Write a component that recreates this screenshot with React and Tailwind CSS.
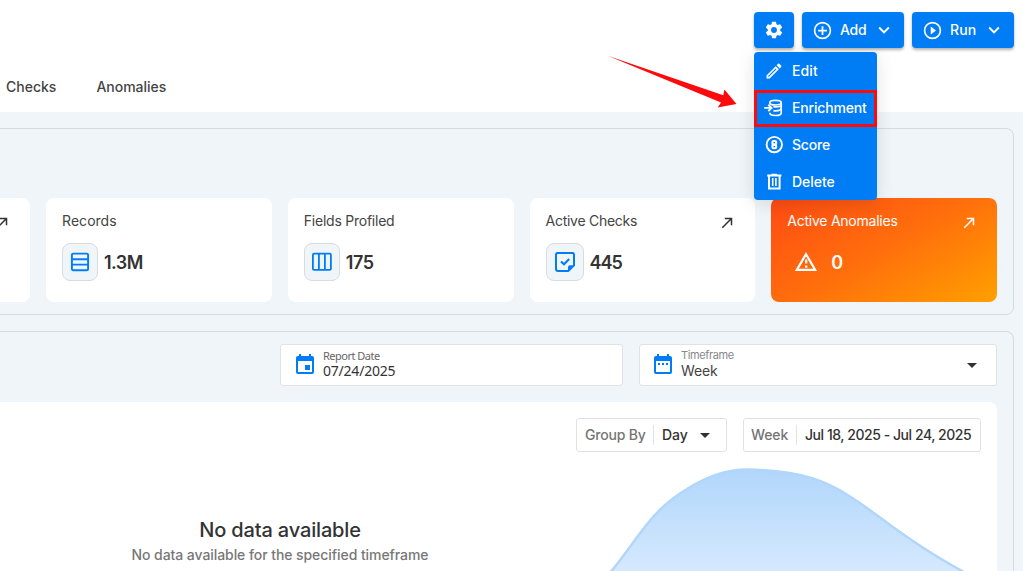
import React from "react";

const paths = {
  cog: "M12,15.5A3.5,3.5 0 0,1 8.5,12A3.5,3.5 0 0,1 12,8.5A3.5,3.5 0 0,1 15.5,12A3.5,3.5 0 0,1 12,15.5M19.43,12.97C19.47,12.65 19.5,12.33 19.5,12C19.5,11.67 19.47,11.34 19.43,11L21.54,9.37C21.73,9.22 21.78,8.95 21.66,8.73L19.66,5.27C19.54,5.05 19.27,4.96 19.05,5.05L16.56,6.05C16.04,5.66 15.5,5.32 14.87,5.07L14.5,2.42C14.46,2.18 14.25,2 14,2H10C9.75,2 9.54,2.18 9.5,2.42L9.13,5.07C8.5,5.32 7.96,5.66 7.44,6.05L4.95,5.05C4.73,4.96 4.46,5.05 4.34,5.27L2.34,8.73C2.21,8.95 2.27,9.22 2.46,9.37L4.57,11C4.53,11.34 4.5,11.67 4.5,12C4.5,12.33 4.53,12.65 4.57,12.97L2.46,14.63C2.27,14.78 2.21,15.05 2.34,15.27L4.34,18.73C4.46,18.95 4.73,19.03 4.95,18.95L7.44,17.94C7.96,18.34 8.5,18.68 9.13,18.93L9.5,21.58C9.54,21.82 9.75,22 10,22H14C14.25,22 14.46,21.82 14.5,21.58L14.87,18.93C15.5,18.67 16.04,18.34 16.56,17.94L19.05,18.95C19.27,19.03 19.54,18.95 19.66,18.73L21.66,15.27C21.78,15.05 21.73,14.78 21.54,14.63L19.43,12.97Z",
  plus: "M12,20C7.59,20 4,16.41 4,12C4,7.59 7.59,4 12,4C16.41,4 20,7.59 20,12C20,16.41 16.41,20 12,20M12,2A10,10 0 0,0 2,12A10,10 0 0,0 12,22A10,10 0 0,0 22,12A10,10 0 0,0 12,2M13,7H11V11H7V13H11V17H13V13H17V11H13V7Z",
  play: "M12,20C7.59,20 4,16.41 4,12C4,7.59 7.59,4 12,4C16.41,4 20,7.59 20,12C20,16.41 16.41,20 12,20M12,2A10,10 0 0,0 2,12A10,10 0 0,0 12,22A10,10 0 0,0 22,12A10,10 0 0,0 12,2M10,16.5L16,12L10,7.5V16.5Z",
  chevron: "M7.41,8.58L12,13.17L16.59,8.58L18,10L12,16L6,10L7.41,8.58Z",
  pencil: "M14.06,9L15,9.94L5.92,19H5V18.08L14.06,9M17.66,3C17.41,3 17.15,3.1 16.96,3.29L15.13,5.12L18.88,8.87L20.71,7.04C21.1,6.65 21.1,6 20.71,5.63L18.37,3.29C18.17,3.09 17.92,3 17.66,3M14.06,6.19L3,17.25V21H6.75L17.81,9.94L14.06,6.19Z",
  arrow: "M5,17.59L15.59,7H9V5H19V15H17V8.41L6.41,19L5,17.59Z",
  calendar: "M19,19H5V8H19M16,1V3H8V1H6V3H5C3.89,3 3,3.89 3,5V19A2,2 0 0,0 5,21H19A2,2 0 0,0 21,19V5C21,3.89 20.1,3 19,3H18V1M17,12H12V17H17V12Z",
  range: "M9,10H7V12H9V10M13,10H11V12H13V10M17,10H15V12H17V10M19,3H18V1H16V3H8V1H6V3H5C3.89,3 3,3.9 3,5V19A2,2 0 0,0 5,21H19A2,2 0 0,0 21,19V5A2,2 0 0,0 19,3M19,19H5V8H19V19Z",
  caret: "M7,10L12,15L17,10H7Z",
};

function Icon({ name, className }) {
  return (
    <svg viewBox="0 0 24 24" fill="currentColor" className={"shrink-0 " + className}>
      <path d={paths[name]} />
    </svg>
  );
}

function EnrichmentIcon() {
  return (
    <svg viewBox="0 0 20 20" fill="none" stroke="currentColor" strokeWidth="1.7" className="size-5 shrink-0">
      <ellipse cx="11.5" cy="4.7" rx="5.700" ry="2.300" />
      <path d="M17.200 4.700V15c0 1.400-2.500 2.500-5.700 2.500s-5.700-1.100-5.700-2.700" />
      <path d="M9.400 12.600c.7.100 1.400.2 2.100.2 3.200 0 5.700-1.100 5.700-2.500M9.400 8.700c.7.100 1.400.1 2.100.1 3.200 0 5.700-.7 5.700-2.100" />
      <path d="M.2 9.900h7.300M4.300 6.700l3.300 3.200-3.300 3.200" strokeWidth="1.900" />
    </svg>
  );
}

function ScoreIcon() {
  return (
    <svg viewBox="0 0 20 20" fill="none" stroke="currentColor" className="size-5 shrink-0">
      <circle cx="10.300" cy="9.600" r="7.700" strokeWidth="1.900" />
      <rect x="8.400" y="6" width="3.800" height="3.600" rx="1.300" strokeWidth="2.100" />
      <rect x="8.400" y="9.600" width="3.800" height="3.600" rx="1.300" strokeWidth="2.100" />
    </svg>
  );
}

function TrashIcon() {
  return (
    <svg viewBox="0 0 20 20" fill="none" stroke="currentColor" className="size-5 shrink-0">
      <path d="M3.200 3.500h14.200M7.600 2.600h5.200" strokeWidth="1.900" />
      <path d="M5 3.500v12.900h10.600V3.500" strokeWidth="2" />
      <path d="M8.700 6v8M11.900 6v8" strokeWidth="1.600" />
    </svg>
  );
}

function RowsIcon() {
  return (
    <svg viewBox="0 0 20 20" fill="none" stroke="currentColor" strokeWidth="1.900" className="size-5">
      <rect x="1.900" y="1.600" width="16.200" height="16.600" rx="1.300" />
      <path d="M2 7.200h16M2 12.600h16" />
    </svg>
  );
}

function ColumnsIcon() {
  return (
    <svg viewBox="0 0 20 20" fill="none" stroke="currentColor" strokeWidth="1.800" className="size-5">
      <rect x="0.900" y="1.700" width="18" height="16.200" rx="1.200" />
      <path d="M6.900 2v16M12.900 2v16" />
    </svg>
  );
}

function ChecksIcon() {
  return (
    <svg viewBox="0 0 20 20" fill="none" stroke="currentColor" className="ml-px size-5">
      <path d="M13.500 18.900H2.800A1.800 1.800 0 0 1 1 17.100V2.500A1.800 1.800 0 0 1 2.800 .9H17.200A1.800 1.800 0 0 1 19 2.500V13.400Z" strokeWidth="2" strokeLinejoin="round" />
      <path d="M13 19.300V15.300A2 2 0 0 1 15 13.300H19.500Z" fill="currentColor" stroke="none" />
      <path d="M6 9.400l3 2.900 5.200-5.200" strokeWidth="2.100" />
    </svg>
  );
}

function ActionButton({ icon, label, tracking }) {
  return (
    <button className="flex h-9 w-[102px] items-center rounded bg-[#007df5] pl-2.5 text-white shadow-[0_2px_3px_rgba(0,0,0,0.3)]">
      <Icon name={icon} className="size-[21px]" />
      <span className={"ml-[7px] w-[33px] text-left text-sm font-[550] " + tracking}>{label}</span>
      <Icon name="chevron" className="size-[22px]" />
    </button>
  );
}

function MenuItem({ icon, label, tracking }) {
  return (
    <div className="flex h-[37px] items-center gap-2 pt-px pl-2.5">
      {icon}
      <span className={"text-sm font-[450] " + tracking}>{label}</span>
    </div>
  );
}

function CardShell({ children }) {
  return <div className="h-[104px] rounded-lg bg-white px-4 pt-[13px]">{children}</div>;
}

function StatCard({ title, value, icon, link, iconWidth = "w-9", tracking, valueTracking }) {
  return (
    <CardShell>
      <div className="flex h-5 items-center justify-between pr-[3px]">
        <span className={"text-sm text-[#444] " + tracking}>{title}</span>
        {link && <Icon name="arrow" className="mt-[3px] size-[18px]" />}
      </div>
      <div className="mt-3 flex items-center gap-1.5">
        <div className={"flex h-[38px] items-center justify-center rounded-lg border border-[#d7dce1] bg-[#f0f5fa] text-[#007df5] " + iconWidth}>
          {icon}
        </div>
        <span className={"pt-px text-lg leading-7 font-semibold " + valueTracking}>{value}</span>
      </div>
    </CardShell>
  );
}

export default function App() {
  return (
    <div className="relative flex h-[571px] flex-col overflow-hidden bg-[#f0f5fa] font-[Inter,sans-serif] text-[#333]">
      <header className="flex h-28 shrink-0 flex-col justify-between bg-white">
        <div className="flex justify-end gap-2 pt-3 pr-[9px]">
          <div className="relative">
            <button className="flex h-9 w-10 items-center justify-center rounded bg-[#007df5] text-white shadow-[0_2px_3px_rgba(0,0,0,0.3)]">
              <Icon name="cog" className="size-5" />
            </button>
            <div className="absolute top-10 left-0 z-10 h-[148px] w-[123px] rounded bg-[#007df5] text-white shadow-[0_4px_18px_rgba(0,0,0,0.12)]">
              <MenuItem icon={<Icon name="pencil" className="size-5" />} label="Edit" tracking="tracking-[0.1px]" />
              <MenuItem icon={<EnrichmentIcon />} label="Enrichment" tracking="tracking-[-0.17px]" />
              <MenuItem icon={<ScoreIcon />} label="Score" tracking="tracking-[-0.2px]" />
              <MenuItem icon={<TrashIcon />} label="Delete" tracking="tracking-[-0.02px]" />
              <div className="absolute top-[38px] left-0 h-[37px] w-[123px] border-3 border-[#fb0a0e]" />
            </div>
          </div>
          <ActionButton icon="plus" label="Add" tracking="tracking-[-0.2px]" />
          <ActionButton icon="play" label="Run" tracking="tracking-[0.1px]" />
        </div>
        <nav className="flex h-[50px] gap-10 pl-1.5 text-sm leading-[50px] font-[450] text-[#444]">
          <span>Checks</span>
          <span>Anomalies</span>
        </nav>
      </header>

      <section className="mt-4 -ml-[213px] h-[187px] w-[1227px] shrink-0 rounded-lg border border-[#d6dbe0] pt-[69px] pr-4 pl-[16.4px]">
        <div className="grid grid-cols-5 gap-4">
          <CardShell>
            <div className="flex h-5 items-center justify-end pr-[3px]">
              <Icon name="arrow" className="mt-[3px] size-[18px]" />
            </div>
          </CardShell>
          <StatCard title="Records" value="1.3M" icon={<RowsIcon />} tracking="tracking-[0.02px]" valueTracking="tracking-[-0.6px]" />
          <StatCard title="Fields Profiled" value="175" icon={<ColumnsIcon />} tracking="tracking-[-0.24px]" valueTracking="tracking-[-0.4px]" />
          <StatCard title="Active Checks" value="445" icon={<ChecksIcon />} iconWidth="w-[38px]" link tracking="tracking-[-0.27px]" valueTracking="tracking-[-1px]" />
          <div className="h-[104px] rounded-lg bg-linear-[150deg,#ff4b14,#ff6f0c_50%,#ffa000] px-4 pt-[13px] text-white">
            <div className="flex h-5 items-center justify-between pr-[3px]">
              <span className="text-sm tracking-[-0.24px]">Active Anomalies</span>
              <Icon name="arrow" className="mt-[3px] size-[18px]" />
            </div>
            <div className="mt-3 ml-[7px] flex h-[38px] items-center gap-[13px]">
              <svg viewBox="0 0 24 24" fill="none" stroke="currentColor" strokeWidth="2.200" className="size-6 shrink-0">
                <path d="M12 4.200L21.200 19.900H2.800Z" />
                <path d="M12.200 9.600v4M12.200 15.400v2.300" />
              </svg>
              <span className="pt-px text-lg leading-7 font-semibold">0</span>
            </div>
          </div>
        </div>
      </section>

      <section className="mt-4 -ml-[213px] h-[280px] w-[1227px] shrink-0 rounded-t-lg border border-b-0 border-[#d6dbe0] px-4 pt-3">
        <div className="flex justify-end gap-4">
          <div className="flex h-[42px] w-[343px] items-center rounded-[3px] border border-[#e0e3e6] bg-white pl-3 font-['Noto_Sans',sans-serif]">
            <Icon name="calendar" className="size-6 text-[#007df5]" />
            <div className="ml-1.5 pb-1">
              <div className="text-[11px] leading-[15px] tracking-[-0.5px] text-[#666]">Report Date</div>
              <div className="text-sm leading-[15px] tracking-[-0.22px]">07/24/2025</div>
            </div>
          </div>
          <div className="flex h-[42px] w-[358px] items-center rounded-[3px] border border-[#e0e3e6] bg-white pl-[11px]">
            <Icon name="range" className="size-6 text-[#007df5]" />
            <div className="ml-1.5 flex-1 pb-1">
              <div className="text-[11px] leading-[15px] tracking-[-0.38px] text-[#888]">Timeframe</div>
              <div className="text-sm leading-[15px] tracking-[-0.1px] text-[#444]">Week</div>
            </div>
            <Icon name="caret" className="mr-3 size-6" />
          </div>
        </div>
        <div className="mt-4 h-[169px] rounded-t-lg bg-white pt-4">
          <div className="flex justify-end gap-4 pr-4 text-sm font-[450]">
            <div className="flex h-[34px] w-[151px] items-center rounded-[3px] border border-[#dfe2e5] pl-2">
              <span className="w-[61px] tracking-[-0.18px] whitespace-nowrap text-[#757575]">Group By</span>
              <span className="ml-[7px] h-5 w-px bg-[#e0e3e6]" />
              <span className="ml-2 w-[26px] font-medium tracking-[-0.05px]">Day</span>
              <Icon name="caret" className="ml-[5px] size-6" />
            </div>
            <div className="flex h-[34px] w-[238px] items-center rounded-[3px] border border-[#dfe2e5] pl-[7px]">
              <span className="w-[37px] tracking-[-0.1px] text-[#757575]">Week</span>
              <span className="ml-2 h-5 w-px bg-[#e0e3e6]" />
              <span className="ml-2 font-medium tracking-[-0.45px] whitespace-nowrap">Jul 18, 2025 - Jul 24, 2025</span>
            </div>
          </div>
          <div className="flex justify-between">
            <div className="ml-[196px] w-[560px] pt-16 text-center">
              <div className="text-xl leading-7 font-[450] tracking-[-0.15px]">No data available</div>
              <div className="mt-px text-sm leading-5 font-[450] tracking-[-0.07px] text-[#777]">No data available for the specified timeframe</div>
            </div>
            <svg viewBox="590 452 407 119" className="h-[119px] w-[407px]">
              <defs>
                <linearGradient id="area" gradientUnits="userSpaceOnUse" x1="0" y1="469" x2="0" y2="571">
                  <stop offset="0" stopColor="#b1d6fb" />
                  <stop offset="1" stopColor="#d5e9fe" />
                </linearGradient>
              </defs>
              <path
                d="M599.500 585L611.500 571C624 556 635 539 648 523C659 509 672 498 687 489C706 477 727 469.500 747 469.500C770 470 792 472 813 478.500C837 486 859 502 880 517.500C906 537 934 556 963 571.500L985 583"
                fill="url(#area)"
                stroke="#b1d6fb"
                strokeWidth="2.500"
              />
            </svg>
          </div>
        </div>
      </section>

      <svg viewBox="0 0 130 54" className="absolute top-[55px] left-[607px] h-[54px] w-[130px]">
        <path d="M.7 .7L116.300 40.200L117.400 34.600L129.500 49L110.700 52.400L114 47.600Z" fill="#fb0a0e" />
      </svg>
    </div>
  );
}
